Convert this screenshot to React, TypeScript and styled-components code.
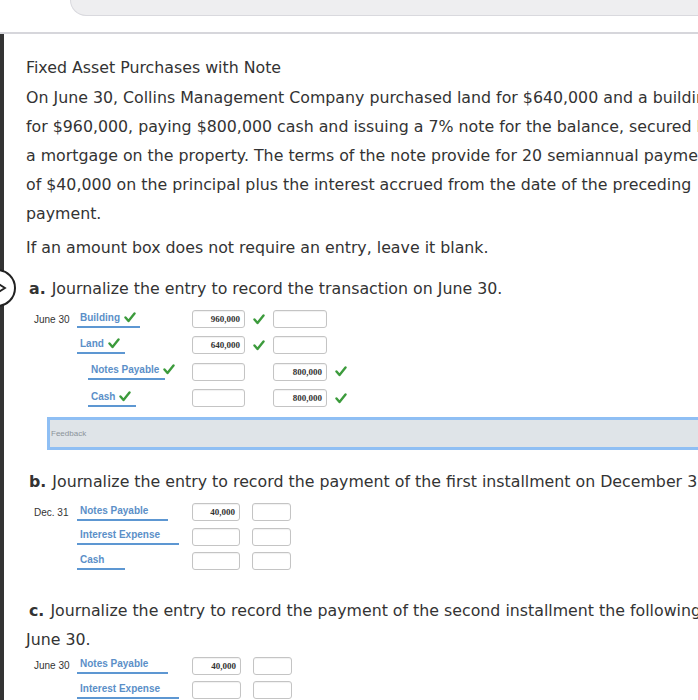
import * as React from 'react';
import styled, {createGlobalStyle} from 'styled-components';

const GlobalStyle = createGlobalStyle`
  html, body {
    margin: 0;
    padding: 0;
    background: #fff;
  }
  body {
    width: 698px;
    overflow: hidden;
  }
`;

const Page = styled.div`
  width: 698px;
  height: 700px;
  overflow: hidden;
  background: #fff;
  font-family: "DejaVu Sans", "Liberation Sans", sans-serif;
  color: #333;
`;

const TopTab = styled.div`
  margin-left: 70px;
  width: 680px;
  height: 15px;
  background: #eeeef0;
  border: 1px solid #d9d9de;
  border-top: none;
  border-bottom-left-radius: 22px;
`;

const Divider = styled.div`
  margin-top: 16px;
  height: 2px;
  background: #d6d6db;
`;

const Content = styled.div`
  position: relative;
  border-left: 4px solid #333;
  padding: 19px 0 40px 22px;
  min-height: 700px;
`;

const Text = styled.div`
  width: 700px;
  font-size: 15.8px;
  line-height: 29px;
  margin-top: ${p => p.$mt || 0}px;
`;

const Paragraph = styled(Text)`
  white-space: nowrap;
`;

const PartLabel = styled.b`
  font-weight: bold;
  margin-right: 6px;
  margin-left: 3px;
`;

const Marker = styled.div`
  position: absolute;
  left: -48px;
  top: -5px;
  width: 38px;
  height: 38px;
  border-radius: 50%;
  border: 2px solid #222;
  background: #fff;
  display: flex;
  align-items: center;
  justify-content: flex-end;
  padding-right: 7px;
  box-sizing: border-box;
`;

const Heading = styled(Text)`
  position: relative;
`;

const Journal = styled.div`
  margin-top: ${p => p.$mt || 0}px;
  margin-left: 8px;
  display: flex;
  flex-direction: column;
  font-family: "Liberation Sans", Arial, sans-serif;
`;

const Row = styled.div`
  display: flex;
  align-items: center;
  height: ${p => p.$h}px;
`;

const DateCell = styled.div`
  width: 43px;
  font-size: 10px;
  color: #333;
`;

const AccountCell = styled.div`
  width: 115px;
  padding-left: ${p => (p.$credit ? 11 : 0)}px;
  box-sizing: border-box;
  white-space: nowrap;
`;

const Account = styled.span`
  display: inline-block;
  white-space: nowrap;
  font-size: 10px;
  font-weight: bold;
  color: #5b8fc8;
  padding: 0 0 3px 3px;
  border-bottom: 2px solid #5d97d2;
  width: ${p => p.$w}px;
  box-sizing: border-box;
  transform: translateY(-2px);
  svg {
    margin-left: 4px;
    vertical-align: -2px;
  }
`;

const Box = styled.div`
  width: ${p => p.$w}px;
  height: 18px;
  box-sizing: border-box;
  border: 1px solid #c4c4c4;
  border-radius: 3px;
  background: #fff;
  font-family: "Liberation Serif", "Times New Roman", serif;
  font-weight: bold;
  font-size: 9px;
  color: #333;
  text-align: right;
  padding-right: 4px;
  line-height: 16px;
  box-shadow: inset 0 1px 1px rgba(0, 0, 0, 0.06);
`;

const CheckSlot = styled.div`
  width: ${p => p.$w}px;
  display: flex;
  justify-content: center;
`;

const Feedback = styled.div`
  margin-top: 6px;
  margin-left: 21px;
  width: 700px;
  height: 33px;
  box-sizing: border-box;
  background: #dfe4e8;
  border: 3px solid #8fbff4;
  border-right: none;
  display: flex;
  align-items: center;
  font-family: "Liberation Sans", Arial, sans-serif;
  font-size: 8px;
  color: #8b939a;
  padding-left: 1px;
`;

const Check: React.FC = () => (
    <svg width="12" height="11" viewBox="0 0 12 11">
        <polyline points="1.5,5.5 4.5,9 10.5,1.5" fill="none" stroke="#3c9b3c" strokeWidth="2.4"
                  strokeLinecap="round" strokeLinejoin="round"/>
    </svg>
);

type Line = { date?: string, account: string, w: number, credit?: boolean, ok?: boolean, dr?: string, cr?: string, drOk?: boolean, crOk?: boolean };

const JournalRows: React.FC<{ lines: Line[], h: number, box1: number, box2: number, gap: number, mt: number }> = props => (
    <Journal $mt={props.mt}>
        {props.lines.map((l, k) => (
            <Row key={k} $h={props.h}>
                <DateCell>{l.date}</DateCell>
                <AccountCell $credit={l.credit}>
                    <Account $w={l.w}>{l.account}{l.ok && <Check/>}</Account>
                </AccountCell>
                <Box $w={props.box1}>{l.dr}</Box>
                <CheckSlot $w={props.gap}>{l.drOk && <Check/>}</CheckSlot>
                <Box $w={props.box2}>{l.cr}</Box>
                <CheckSlot $w={props.gap}>{l.crOk && <Check/>}</CheckSlot>
            </Row>
        ))}
    </Journal>
);

const partA: Line[] = [
    {date: 'June 30', account: 'Building', w: 63, ok: true, dr: '960,000', drOk: true},
    {account: 'Land', w: 48, ok: true, dr: '640,000', drOk: true},
    {account: 'Notes Payable', w: 77, credit: true, ok: true, cr: '800,000', crOk: true},
    {account: 'Cash', w: 48, credit: true, ok: true, cr: '800,000', crOk: true},
];

const partB: Line[] = [
    {date: 'Dec. 31', account: 'Notes Payable', w: 91, dr: '40,000'},
    {account: 'Interest Expense', w: 102},
    {account: 'Cash', w: 48},
];

const partC: Line[] = [
    {date: 'June 30', account: 'Notes Payable', w: 91, dr: '40,000'},
    {account: 'Interest Expense', w: 102},
];

export default function App() {
    return (
        <Page>
            <GlobalStyle/>
            <TopTab/>
            <Divider/>
            <Content>
                <Text>Fixed Asset Purchases with Note</Text>
                <Paragraph $mt={1}>
                    On June 30, Collins Management Company purchased land for $640,000 and a building<br/>
                    for $960,000, paying $800,000 cash and issuing a 7% note for the balance, secured by<br/>
                    a mortgage on the property. The terms of the note provide for 20 semiannual payments<br/>
                    of $40,000 on the principal plus the interest accrued from the date of the preceding<br/>
                    payment.
                </Paragraph>
                <Text $mt={5}>If an amount box does not require an entry, leave it blank.</Text>
                <Heading $mt={12}>
                    <Marker>
                        <svg width="9" height="10" viewBox="0 0 9 10">
                            <polyline points="1.5,1.5 7,5 1.5,8.5" fill="none" stroke="#222" strokeWidth="1.8"/>
                        </svg>
                    </Marker>
                    <PartLabel>a.</PartLabel>Journalize the entry to record the transaction on June 30.
                </Heading>
                <JournalRows lines={partA} h={26.3} box1={53} box2={54} gap={28} mt={3}/>
                <Feedback>Feedback</Feedback>
                <Heading $mt={17}>
                    <PartLabel>b.</PartLabel>Journalize the entry to record the payment of the first installment on December 31.
                </Heading>
                <JournalRows lines={partB} h={24.5} box1={48} box2={39} gap={12} mt={4}/>
                <Heading $mt={22}>
                    <PartLabel>c.</PartLabel>Journalize the entry to record the payment of the second installment the following June 30.
                </Heading>
                <JournalRows lines={partC} h={24.5} box1={49} box2={39} gap={12} mt={0}/>
            </Content>
        </Page>
    );
}
